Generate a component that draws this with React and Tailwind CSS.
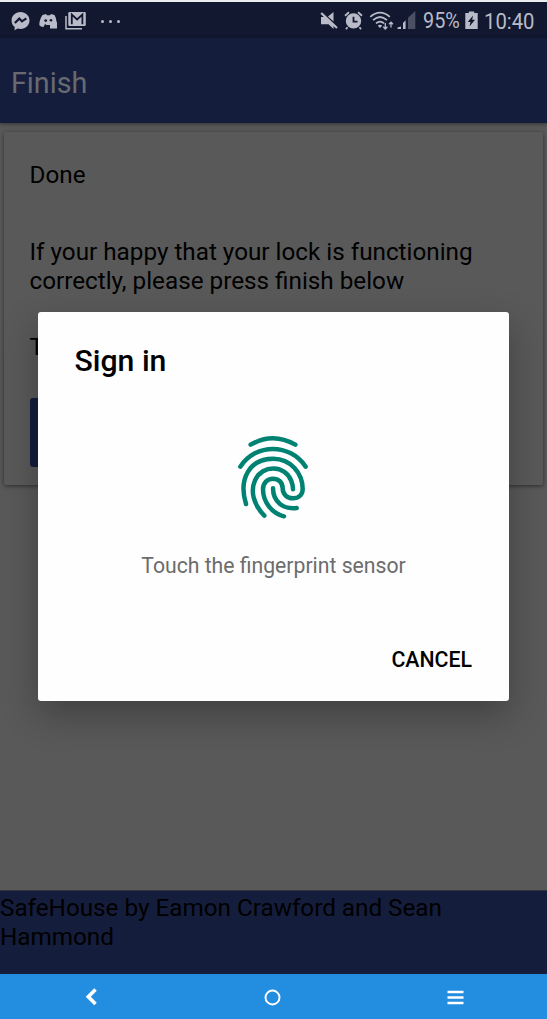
import React from "react";

function StatusBar() {
  return (
    <div className="flex h-[36px] shrink-0 items-center bg-[#11182f] pt-[2px] text-[#b9bbc8]">
      <svg className="ml-[11px] h-[20px] w-[19px]" viewBox="0 0 19 20" fill="none">
        <path d="M9.500 1C4.400 1 .6 4.700.6 9.400c0 2.700 1.100 4.900 3 6.400v3.400l3.100-1.700c.9.200 1.800.4 2.800.4 5.100 0 9-3.700 9-8.500S14.600 1 9.500 1z" fill="#b9bbc8" />
        <path d="M3.800 12l4.500-4.400 2.600 2.700 4.500-2.900" stroke="#11182f" strokeWidth="2.200" />
      </svg>
      <svg className="ml-[9px] h-[20px] w-[19px]" viewBox="0 0 19 20" fill="currentColor">
        <path d="M3.500 4l3.500-1 1 1.200h3L12 3l3.500 1c1.300 2.300 1.900 4.700 2 7H11v3H7.500L6 13l-1.500 3C2 15.600 1 15 .3 14c0-3.600 1.200-7.200 3.200-10z" />
        <circle cx="6.700" cy="9.600" r="1.400" fill="#11182f" />
        <circle cx="12" cy="9.200" r="1.300" fill="#11182f" />
        <rect x="11" y="11" width="7" height="6.500" />
      </svg>
      <svg className="ml-[7px] h-[20px] w-[21px]" viewBox="0 0 21 20" fill="none">
        <path d="M1 5v12.700h16" stroke="#b9bbc8" strokeWidth="1.500" />
        <rect x="3.300" y="1" width="17.500" height="14" rx="1.300" fill="#b9bbc8" />
        <path d="M6.800 13.200V3.500l5.300 5 5.300-5v9.700" stroke="#11182f" strokeWidth="1.800" />
      </svg>
      <div className="ml-[15px] flex gap-[5px]">
        <i className="size-[3px] rounded-full bg-current" />
        <i className="size-[3px] rounded-full bg-current" />
        <i className="size-[3px] rounded-full bg-current" />
      </div>
      <div className="ml-auto flex items-center">
        <svg className="h-[20px] w-[18px]" viewBox="0 0 18 20" fill="currentColor">
          <path d="M1 6h4l8.500 8v4L8.500 13.300H1zM8 5.500l5.500-4.500v9.500z" />
          <path d="M1.200 2L17 17" stroke="currentColor" strokeWidth="2.300" />
        </svg>
        <svg className="ml-[6px] h-[20px] w-[19px]" viewBox="0 0 19 20">
          <circle cx="9.500" cy="9.900" r="7.700" fill="currentColor" />
          <path d="M1 4.700l4-3.500M18 4.700l-4-3.500M3.500 16.200L2 18.200M15.500 16.200l1.500 2" stroke="currentColor" strokeWidth="1.800" />
          <path d="M9.500 5.700v5h4" stroke="#11182f" strokeWidth="1.800" fill="none" />
        </svg>
        <svg className="ml-[6px] h-[20px] w-[25px]" viewBox="0 0 25 20" fill="none" stroke="currentColor" strokeWidth="1.800">
          <path d="M1.300 5.800c6-5.700 13.500-5.700 19.500 0M4 9.200c4.600-4.200 9.500-4.200 14 0M7 12.400c2.600-2.300 5.500-2.300 8.100 0" />
          <path d="M8.800 14.700c1.400-1.200 3-1.200 4.400 0L11 17z" fill="currentColor" stroke="none" />
          <path d="M16.300 12v6M14.200 15.800l2.100 2.200 2.100-2.200M22 16.500v-5M20 13.300l2-2.100 2 2.100" strokeWidth="1.300" />
        </svg>
        <svg className="ml-[3px] h-[20px] w-[19px]" viewBox="0 0 19 20" fill="currentColor">
          <path d="M.5 18v-1.500L4 15.500V18zM6 18v-6l2.600-2.800V18z" />
          <path d="M11 18V6.700L18.300 0v18z" opacity=".35" />
        </svg>
        <span className="ml-[7px] w-[38px] text-[22px] leading-[24px] whitespace-nowrap"><span className="inline-block origin-left scale-x-[0.9]">95%</span></span>
        <svg className="ml-[4px] h-[20px] w-[13px]" viewBox="0 0 13 20">
          <path d="M3.800.500h5.400v1.600h3.500V18H.3V2.100h3.500z" fill="currentColor" />
          <path d="M8 4.500L2.800 11h2.700L4.500 15.500l5.500-6.700H7.200z" fill="#11182f" />
        </svg>
        <span className="ml-[6px] w-[63px] text-[22.500px] leading-[24px] whitespace-nowrap"><span className="inline-block origin-left scale-x-[0.9]">10:40</span></span>
      </div>
    </div>
  );
}

function Fingerprint() {
  return (
    <svg className="ml-[2px] size-[110px]" viewBox="0 0 330 330" fill="none" stroke="#008272" strokeWidth="13.500" strokeLinecap="round" strokeLinejoin="round">
      <path d="M92 74C135 49 182 49 226 74" />
      <path d="M61 140C108 69 209 69 257 140" />
      <path d="M78 252C54 174 91 116 160 116C212 116 248 160 248 207C248 225 235 235 219 235C201 235 188 223 188 205C188 187 175 176 159 176C142 176 129 189 129 208C129 248 158 281 192 289" />
      <path d="M133 287C99 252 91 212 105 181C127 132 197 135 214 183C217 191 219 199 219 208" />
      <path d="M159 205C159 246 191 269 230 264" />
    </svg>
  );
}

function SignInDialog() {
  return (
    <div role="dialog" className="absolute top-[312px] left-[38px] flex h-[388.500px] w-[471px] flex-col rounded-[3px] bg-[#fefefe] shadow-[0_14px_36px_rgba(0,0,0,0.28)]">
      <h2 className="pt-[31px] pl-[36.500px] text-[30.200px] leading-[36px] font-medium text-black">Sign in</h2>
      <div className="mt-[41px] flex justify-center"><Fingerprint /></div>
      <p className="mt-[22px] text-center text-[21.200px] leading-[28px] text-[#6c6c6c]">Touch the fingerprint sensor</p>
      <button className="mt-auto mr-[37px] mb-[27px] self-end text-[21.300px] leading-[28px] font-medium text-black">CANCEL</button>
    </div>
  );
}

export default function App() {
  return (
    <div className="relative flex h-[1019px] w-[547px] flex-col overflow-hidden bg-[#595959] pt-[2px] font-[Roboto,sans-serif] text-black">
      <div className="absolute top-0 left-0 h-[2px] w-full bg-[#e9edf0]" />
      <StatusBar />
      <header className="flex h-[85px] shrink-0 items-center bg-[#151d3c] pt-[6px] pl-[11px] text-[28.700px] text-[#686a72] shadow-[0_1px_4px_rgba(0,0,0,0.45)]">Finish</header>
      <main className="flex-1 px-[4px] pt-[9px]">
        <section className="h-[353px] rounded-[2px] bg-[#595959] px-[25.500px] pt-[29px] text-[24.250px] leading-[29px] shadow-[0_1px_4px_rgba(0,0,0,0.5)]">
          <p>Done</p>
          <p className="mt-[48px]">If your happy that your lock is functioning<br />correctly, please press finish below</p>
          <p className="mt-[37px]">T</p>
          <div className="mt-[36px] h-[69px] w-[160px] rounded-[3px] bg-[#151d3c]" />
        </section>
      </main>
      <footer className="h-[84px] shrink-0 border-t border-[#30333d] bg-[#151d3c] pt-[3px] text-[24.250px] leading-[29px]">
        SafeHouse by Eamon Crawford and Sean<br />Hammond
      </footer>
      <nav className="grid h-[45px] shrink-0 grid-cols-3 items-center justify-items-center bg-[#238ddf] text-white">
        <svg className="size-[20px]" viewBox="0 0 20 20" fill="none" stroke="currentColor" strokeWidth="3.600"><path d="M14.500 2.600L7.300 9.800l7.200 7.200" /></svg>
        <svg className="size-[20px]" viewBox="0 0 20 20" fill="none" stroke="currentColor" strokeWidth="1.900"><circle cx="9.500" cy="10.500" r="7" /></svg>
        <svg className="size-[20px]" viewBox="0 0 20 20" fill="none" stroke="currentColor" strokeWidth="2.500"><path d="M1.500 5h16M1.500 10.500h16M1.500 16h16" /></svg>
      </nav>
      <SignInDialog />
    </div>
  );
}
